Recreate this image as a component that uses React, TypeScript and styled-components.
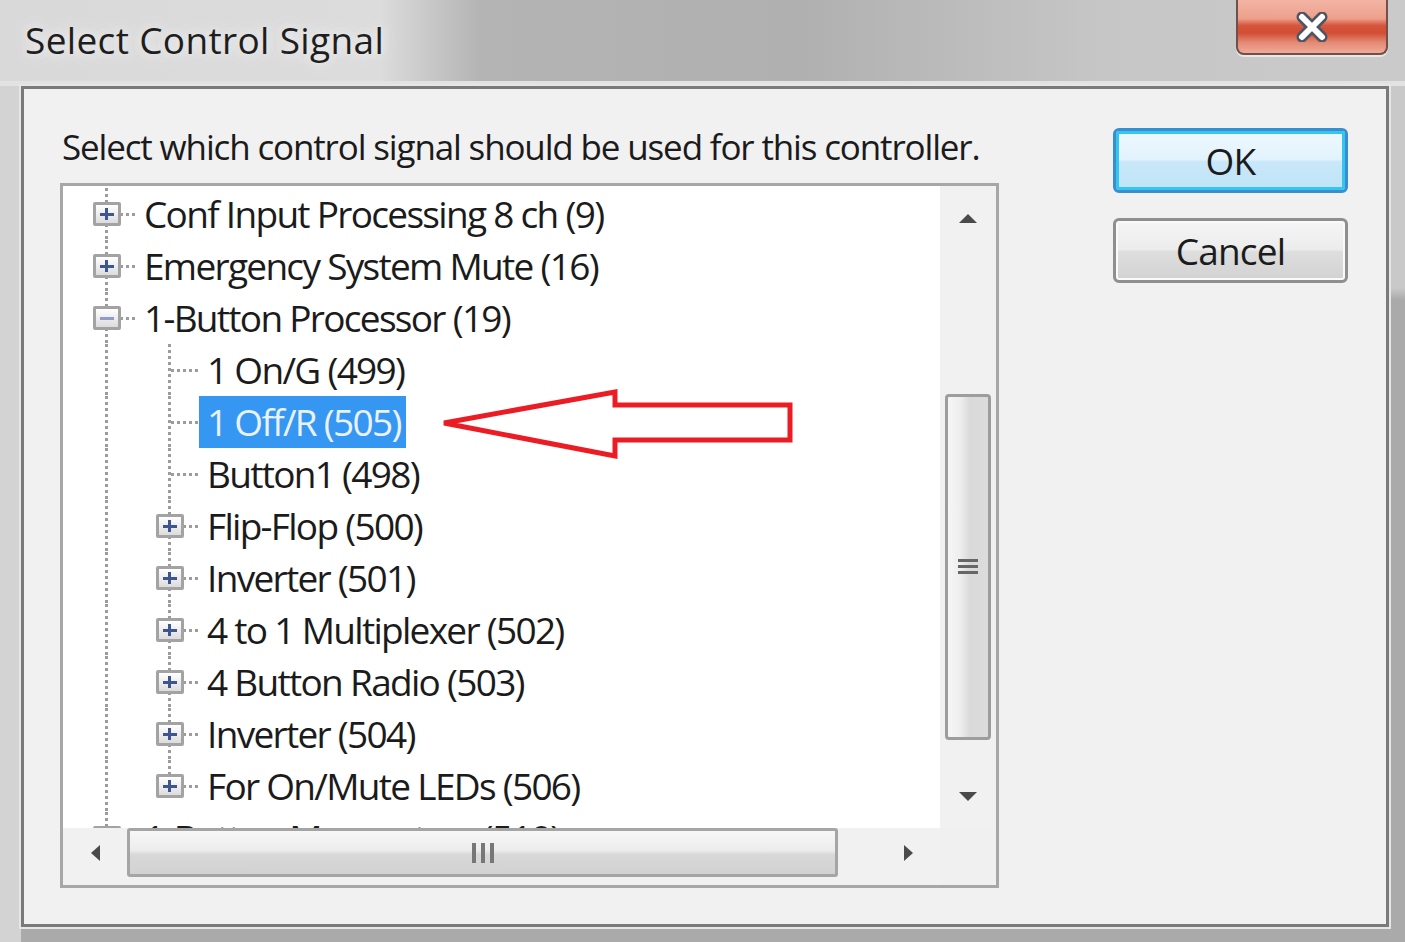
import styled, { createGlobalStyle } from "styled-components";

const GlobalStyle = createGlobalStyle`
  html, body { margin: 0; padding: 0; }
  body {
    font-family: "Open Sans", "Noto Sans", sans-serif;
    background: #aaaaaa;
    color: #1b1b1b;
  }
`;

const Frame = styled.div`
  position: relative;
  width: 1405px;
  height: 942px;
  overflow: hidden;
  display: flex;
  flex-direction: column;
  background: linear-gradient(90deg, #d3d3d3 0 21px, transparent 21px),
    linear-gradient(#c9c9c9 0 288px, #aaaaaa 300px);
`;

const TitleBar = styled.div`
  height: 86px;
  flex: none;
  display: flex;
  justify-content: space-between;
  align-items: flex-start;
  padding: 0 17px 0 25px;
  box-sizing: border-box;
  background: linear-gradient(90deg, #d9d9d9 0, #dcdcdc 380px, #b4b4b4 480px, #b0b0b0 800px, #c6c6c6 1100px, #cacaca 100%);
  box-shadow: inset 0 -5px 0 #e2e2e2;
`;

const Title = styled.div`
  font-size: 37px;
  line-height: 80px;
  color: #1e1e1e;
  letter-spacing: 0.35px;
  text-shadow: 0 0 10px #f2f2f2, 0 0 18px #ececec;
`;

const CloseButton = styled.div`
  width: 152px;
  height: 55px;
  box-sizing: border-box;
  border: 2px solid #70504a;
  border-top: none;
  border-radius: 0 0 8px 8px;
  background: linear-gradient(#f3b4a4 0, #eda08c 35%, #d6553d 48%, #d24d34 62%, #e48a74 80%, #eeaa98 100%);
  display: flex;
  align-items: center;
  justify-content: center;
  box-shadow: 0 2px 0 #e8e8e8;
`;

const Client = styled.div`
  flex: 1;
  margin: 0 16px 15px 21px;
  border: 3px solid #7a7a7a;
  background: #f1f1f1;
  display: flex;
  box-shadow: 0 0 0 2px #e6e6e6;
`;

const LeftPane = styled.div`
  width: 975px;
  padding-left: 36px;
  box-sizing: border-box;
  display: flex;
  flex-direction: column;
`;

const Description = styled.div`
  font-size: 35px;
  letter-spacing: -1.15px;
  line-height: 40px;
  margin: 38px 0 16px 2px;
  white-space: nowrap;
`;

const TreeBox = styled.div`
  width: 939px;
  height: 705px;
  box-sizing: border-box;
  border: 3px solid #a7a7a7;
  background: #fff;
  display: grid;
  grid-template-columns: 1fr 56px;
  grid-template-rows: 1fr 57px;
`;

const Viewport = styled.div`
  overflow: hidden;
  padding: 2px 0 0 13px;
`;

const Row = styled.div`
  height: 52px;
  display: flex;
  align-items: stretch;
`;

const dots = "repeating-linear-gradient(to bottom, #9c9c9c 0 3px, transparent 3px 6px)";
const hdots = "repeating-linear-gradient(to right, #9c9c9c 0 3px, transparent 3px 6px)";

const Indent = styled.div<{ $line: boolean }>`
  width: 63px;
  flex: none;
  background: ${(p) => (p.$line ? `${dots} 29px 0 / 3px 100% no-repeat` : "none")};
`;

const Connector = styled.div<{ $last: boolean }>`
  width: 60px;
  flex: none;
  position: relative;
  background: ${(p) => `${dots} 29px 0 / 3px ${p.$last ? "50%" : "100%"} no-repeat`},
    ${hdots} 32px 25px / 28px 3px no-repeat;
  display: flex;
  align-items: center;
  justify-content: center;
`;

const Expander = styled.div`
  width: 28px;
  height: 24px;
  box-sizing: border-box;
  border: 3px solid #a3a3a3;
  border-radius: 2px;
  background: linear-gradient(#ffffff, #dcdcdc);
  position: relative;
  margin-left: 2px;
  &::before, &::after {
    content: "";
    position: absolute;
    background: #3f5590;
  }
  &::before { left: 4px; right: 4px; top: 8px; height: 3px; }
`;

const Plus = styled(Expander)`
  &::after { top: 3px; bottom: 3px; left: 9px; width: 3px; }
`;

const Minus = styled(Expander)`
  &::before { background: #8f9cc4; }
`;

const Label = styled.div<{ $selected?: boolean }>`
  font-size: 37px;
  letter-spacing: -1.7px;
  line-height: 52px;
  padding: 0 5px 0 8px;
  white-space: nowrap;
  background: ${(p) => (p.$selected ? "#3597f2" : "transparent")};
  color: ${(p) => (p.$selected ? "#eaf2ff" : "#1b1b1b")};
`;

const VScroll = styled.div`
  background: #f1f1f1;
  display: flex;
  flex-direction: column;
  align-items: center;
`;

const HScroll = styled.div`
  background: #f1f1f1;
  display: flex;
  align-items: flex-start;
`;

const Corner = styled.div`
  background: #f0f0f0;
`;

const ArrowCell = styled.div<{ $w: number; $h: number }>`
  flex: none;
  width: ${(p) => p.$w}px;
  height: ${(p) => p.$h}px;
  display: flex;
  align-items: center;
  justify-content: center;
`;

const VThumb = styled.div`
  margin-top: 144px;
  width: 46px;
  height: 346px;
  box-sizing: border-box;
  border: 3px solid #9d9d9d;
  border-radius: 4px;
  background: linear-gradient(90deg, #f6f6f6 0, #eeeeee 30%, #d9d9d9 55%, #dcdcdc 100%);
  display: flex;
  align-items: center;
  justify-content: center;
`;

const HThumb = styled.div`
  width: 711px;
  height: 49px;
  box-sizing: border-box;
  border: 3px solid #a5a5a5;
  border-radius: 3px;
  background: linear-gradient(#f7f7f7 0, #ececec 45%, #d8d8d8 55%, #d2d2d2 100%);
  display: flex;
  align-items: center;
  justify-content: center;
`;

const Spacer = styled.div`
  flex: 1;
`;

const ButtonColumn = styled.div`
  margin-left: 114px;
  padding-top: 39px;
  display: flex;
  flex-direction: column;
  gap: 25px;
`;

const DialogButton = styled.div<{ $default?: boolean }>`
  width: 235px;
  height: 65px;
  box-sizing: border-box;
  border-radius: 6px;
  display: flex;
  align-items: center;
  justify-content: center;
  font-size: 37px;
  letter-spacing: -0.8px;
  border: 3px solid ${(p) => (p.$default ? "#3a8ed0" : "#8f8f8f")};
  background: ${(p) =>
    p.$default
      ? "linear-gradient(#eef8fe 0, #e2f3fd 48%, #c9e8f9 52%, #bfe3f7 100%)"
      : "linear-gradient(#f5f5f5 0, #ececec 48%, #dedede 52%, #d2d2d2 100%)"};
  box-shadow: ${(p) => (p.$default ? "inset 0 0 0 3px #33c6f0" : "inset 0 0 0 2px #fafafa")};
`;

const Annotation = styled.svg`
  position: absolute;
  left: 440px;
  top: 388px;
`;

type Node = {
  label: string;
  level: number;
  kind: "plus" | "minus" | "leaf";
  last?: boolean;
  selected?: boolean;
};

const nodes: Node[] = [
  { label: "Conf Input Processing 8 ch (9)", level: 0, kind: "plus" },
  { label: "Emergency System Mute (16)", level: 0, kind: "plus" },
  { label: "1-Button Processor (19)", level: 0, kind: "minus" },
  { label: "1 On/G (499)", level: 1, kind: "leaf" },
  { label: "1 Off/R (505)", level: 1, kind: "leaf", selected: true },
  { label: "Button1 (498)", level: 1, kind: "leaf" },
  { label: "Flip-Flop (500)", level: 1, kind: "plus" },
  { label: "Inverter (501)", level: 1, kind: "plus" },
  { label: "4 to 1 Multiplexer (502)", level: 1, kind: "plus" },
  { label: "4 Button Radio (503)", level: 1, kind: "plus" },
  { label: "Inverter (504)", level: 1, kind: "plus" },
  { label: "For On/Mute LEDs (506)", level: 1, kind: "plus", last: true },
  { label: "1-Button Momentary (510)", level: 0, kind: "plus" },
];

const Tri = ({ dir }: { dir: "up" | "down" | "left" | "right" }) => {
  const pts = {
    up: "0,9 9,0 18,9",
    down: "0,0 18,0 9,9",
    left: "9,0 9,16 0,8",
    right: "0,0 0,16 9,8",
  }[dir];
  const vertical = dir === "up" || dir === "down";
  return (
    <svg width={vertical ? 18 : 9} height={vertical ? 9 : 16} style={{ filter: "blur(0.6px)" }}>
      <polygon points={pts} fill="#4a4a4a" />
    </svg>
  );
};

const Grip = ({ vertical }: { vertical: boolean }) =>
  vertical ? (
    <svg width="20" height="18">
      {[1, 7, 13].map((y) => (
        <rect key={y} x="0" y={y} width="20" height="3" fill="#666" />
      ))}
    </svg>
  ) : (
    <svg width="24" height="20">
      {[1, 10, 19].map((x) => (
        <rect key={x} x={x} y="0" width="4" height="20" fill="#777" />
      ))}
    </svg>
  );

export default function App() {
  return (
    <Frame>
      <GlobalStyle />
      <TitleBar>
        <Title>Select Control Signal</Title>
        <CloseButton>
          <svg width="34" height="30" viewBox="0 0 34 30">
            <path d="M7 5 L27 25 M27 5 L7 25" stroke="#4d5563" strokeWidth="11" strokeLinecap="round" />
            <path d="M7 5 L27 25 M27 5 L7 25" stroke="#ffffff" strokeWidth="6" strokeLinecap="round" />
          </svg>
        </CloseButton>
      </TitleBar>
      <Client>
        <LeftPane>
          <Description>Select which control signal should be used for this controller.</Description>
          <TreeBox>
            <Viewport>
              {nodes.map((n) => (
                <Row key={n.label + n.level}>
                  {n.level === 1 && <Indent $line />}
                  <Connector $last={!!n.last}>
                    {n.kind === "plus" && <Plus />}
                    {n.kind === "minus" && <Minus />}
                  </Connector>
                  <Label $selected={n.selected}>{n.label}</Label>
                </Row>
              ))}
            </Viewport>
            <VScroll>
              <ArrowCell $w={56} $h={64}>
                <Tri dir="up" />
              </ArrowCell>
              <VThumb>
                <Grip vertical />
              </VThumb>
              <Spacer />
              <ArrowCell $w={56} $h={64}>
                <Tri dir="down" />
              </ArrowCell>
            </VScroll>
            <HScroll>
              <ArrowCell $w={64} $h={50}>
                <Tri dir="left" />
              </ArrowCell>
              <HThumb>
                <Grip vertical={false} />
              </HThumb>
              <Spacer />
              <ArrowCell $w={64} $h={50}>
                <Tri dir="right" />
              </ArrowCell>
            </HScroll>
            <Corner />
          </TreeBox>
        </LeftPane>
        <ButtonColumn>
          <DialogButton $default>OK</DialogButton>
          <DialogButton>Cancel</DialogButton>
        </ButtonColumn>
      </Client>
      <Annotation width="360" height="74" viewBox="0 0 360 74">
        <polygon
          points="4,35 175,4 175,17 350,17 350,52 175,52 175,68"
          fill="none"
          stroke="#ec1c24"
          strokeWidth="5"
          strokeLinejoin="miter"
        />
      </Annotation>
    </Frame>
  );
}
